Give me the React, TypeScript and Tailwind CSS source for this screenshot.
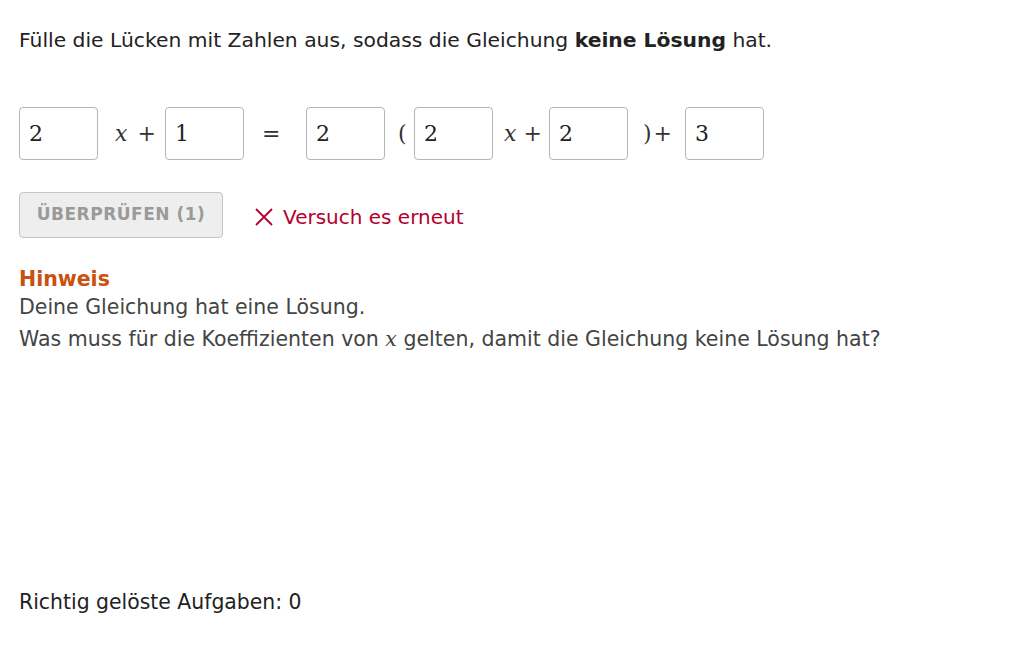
import React from "react";

// ======== Eingabefeld für eine Lücke
function Gap({ value }: { value: string }) {
  return (
    <div className="w-[79px] h-[53px] shrink-0 border border-[#b5b5b5] rounded-[4px] bg-white flex items-center pl-[9px] text-[22px] text-[#222] font-['DejaVu_Serif',serif]">
      {value}
    </div>
  );
}

// ======== Zwischenstück der Gleichung mit fester Breite
function Op({ w, children }: { w: string; children: React.ReactNode }) {
  return (
    <div className={"shrink-0 flex items-center text-[22px] text-[#333] font-['DejaVu_Serif',serif] " + w}>
      {children}
    </div>
  );
}

export default function App() {
  return (
    <div className="w-[1032px] h-[645px] bg-white font-['DejaVu_Sans',sans-serif] text-[#222] relative">
      <div className="pl-[19px] pt-[27px]">
        <p className="text-[20.3px] leading-[26px]">
          Fülle die Lücken mit Zahlen aus, sodass die Gleichung <b>keine Lösung</b> hat.
        </p>

        {/* ======== Gleichung */}
        <div className="flex items-center mt-[54px]">
          <Gap value="2" />
          <Op w="w-[67px] pl-[17px]">
            <i>x</i>
            <span className="ml-[10px]">+</span>
          </Op>
          <Gap value="1" />
          <Op w="w-[62px] pl-[18px]">=</Op>
          <Gap value="2" />
          <Op w="w-[29px] pl-[13px]">(</Op>
          <Gap value="2" />
          <Op w="w-[56px] pl-[11px]">
            <i>x</i>
            <span className="ml-[7px]">+</span>
          </Op>
          <Gap value="2" />
          <Op w="w-[57px] pl-[15px]">
            <span>)</span>
            <span className="ml-[2px]">+</span>
          </Op>
          <Gap value="3" />
        </div>

        {/* ======== Prüfen */}
        <div className="flex items-center mt-[32px]">
          <button className="w-[204px] h-[46px] bg-[#eeeeee] border border-[#c4c4c4] rounded-[4px] text-[#9a9a9a] font-bold text-[17px] tracking-[0.5px]">
            ÜBERPRÜFEN (1)
          </button>
          <span className="ml-[31px] text-[20px] text-[#b3002d] flex items-center mt-[4px]">
            <svg width="20" height="20" viewBox="0 0 20 20" className="mr-[9px]">
              <path d="M2 2 L18 18 M18 2 L2 18" stroke="#b3002d" strokeWidth="1.8" fill="none" />
            </svg>
            Versuch es erneut
          </span>
        </div>

        {/* ======== Hinweis */}
        <div className="mt-[28px] text-[20.5px]">
          <div className="font-bold text-[#c9500e] leading-[26px]">Hinweis</div>
          <div className="text-[#444] leading-[30px]">Deine Gleichung hat eine Lösung.</div>
          <div className="text-[#444] leading-[34px]">
            Was muss für die Koeffizienten von <span className="italic font-['DejaVu_Serif',serif]">x</span> gelten, damit die Gleichung keine Lösung hat?
          </div>
        </div>

        <div className="absolute left-[19px] top-[587px] text-[20.4px] text-[#222]">
          Richtig gelöste Aufgaben: 0
        </div>
      </div>
    </div>
  );
}
